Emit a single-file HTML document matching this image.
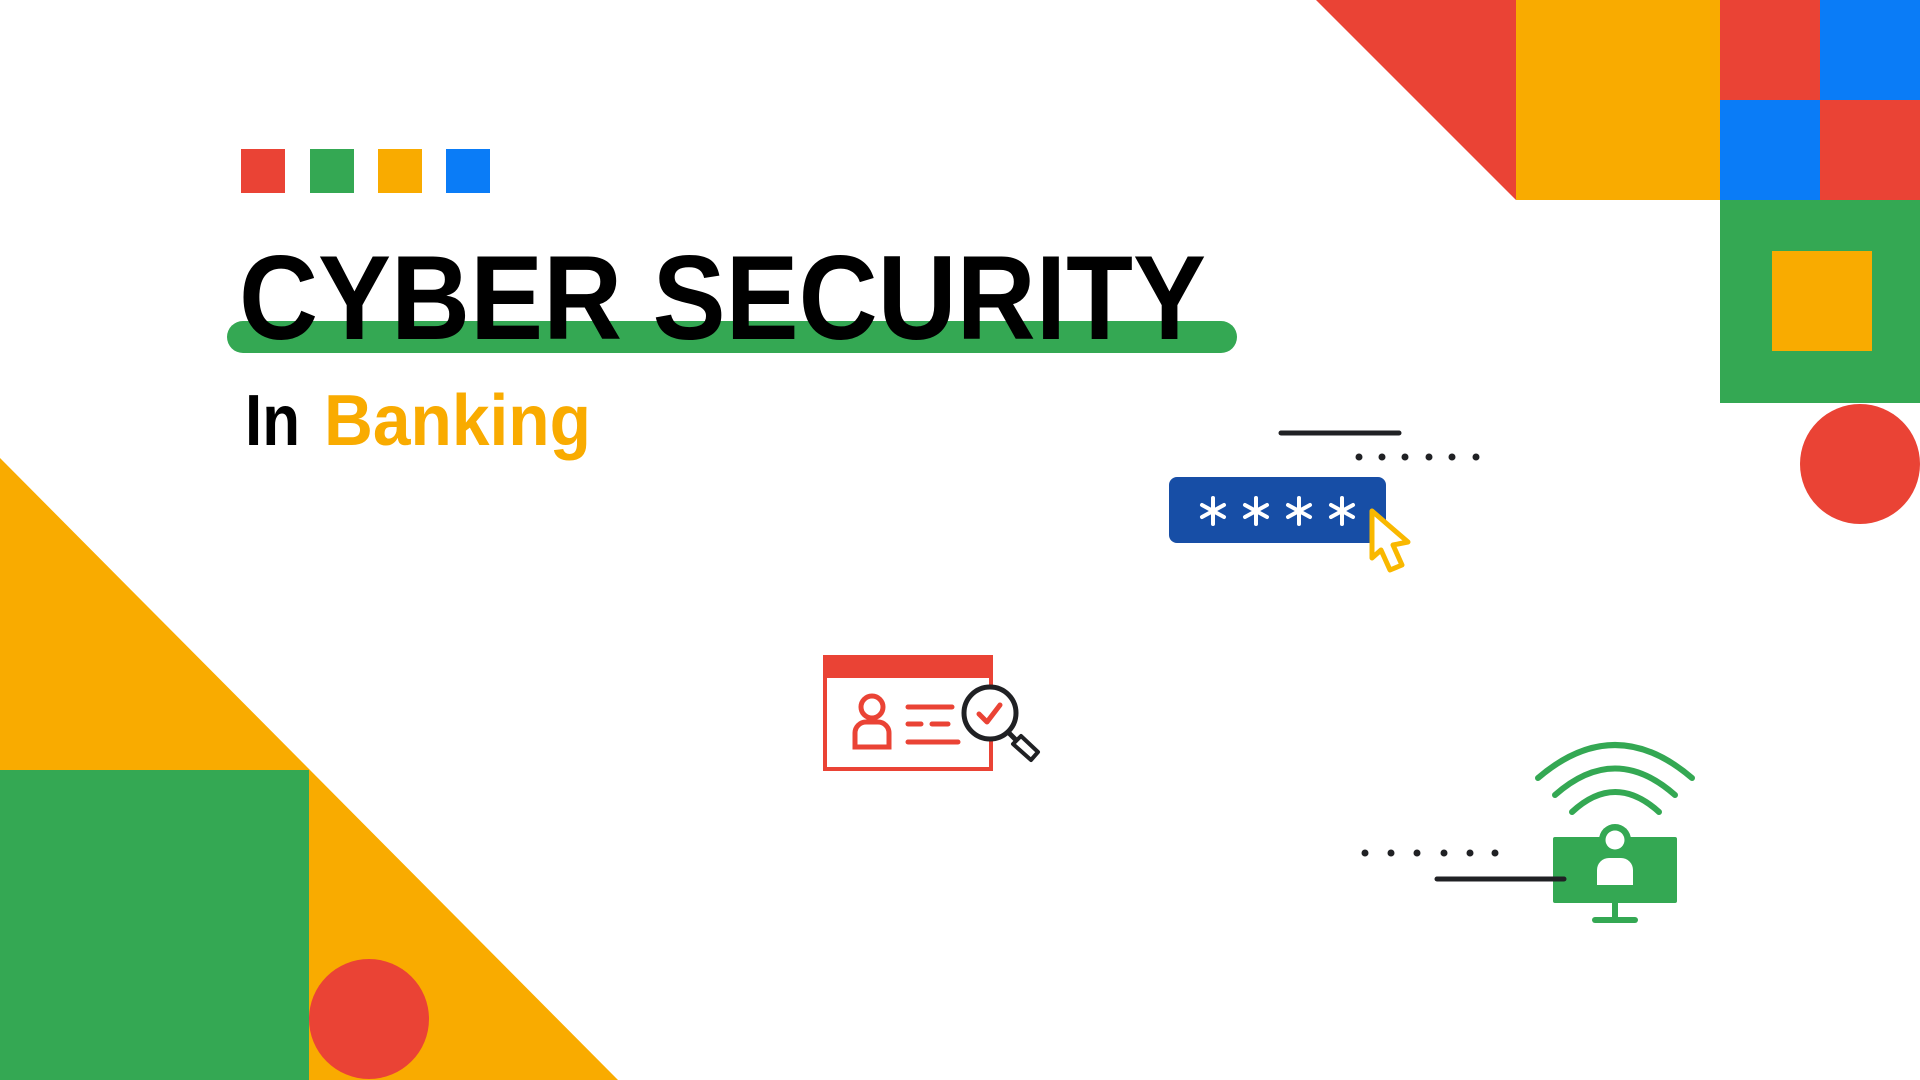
<!DOCTYPE html>
<html><head><meta charset="utf-8"><style>
html,body{margin:0;padding:0;background:#fff;width:1920px;height:1080px;overflow:hidden}
svg{display:block}
</style></head><body>
<svg width="1920" height="1080" viewBox="0 0 1920 1080" xmlns="http://www.w3.org/2000/svg">
<!-- top right -->
<polygon points="1316,0 1516,0 1516,200" fill="#EA4335"/>
<rect x="1516" y="0" width="204" height="200" fill="#F9AB00"/>
<rect x="1720" y="0" width="100" height="100" fill="#EA4335"/>
<rect x="1820" y="0" width="100" height="100" fill="#0A7CF7"/>
<rect x="1720" y="100" width="100" height="100" fill="#0A7CF7"/>
<rect x="1820" y="100" width="100" height="100" fill="#EA4335"/>
<rect x="1720" y="200" width="200" height="203" fill="#34A853"/>
<rect x="1772" y="251" width="100" height="100" fill="#F9AB00"/>
<circle cx="1860" cy="464" r="60" fill="#EA4335"/>
<!-- bottom left -->
<polygon points="0,458 618,1080 0,1080" fill="#F9AB00"/>
<rect x="0" y="770" width="309" height="310" fill="#34A853"/>
<circle cx="369" cy="1019" r="60" fill="#EA4335"/>
<!-- small squares -->
<rect x="241" y="149" width="44" height="44" fill="#EA4335"/>
<rect x="310" y="149" width="44" height="44" fill="#34A853"/>
<rect x="378" y="149" width="44" height="44" fill="#F9AB00"/>
<rect x="446" y="149" width="44" height="44" fill="#0A7CF7"/>
<!-- title -->
<rect x="227" y="321" width="1010" height="32" rx="16" fill="#34A853"/>
<text x="239" y="339" font-family="Liberation Sans, sans-serif" font-weight="bold" font-size="120" textLength="967" lengthAdjust="spacingAndGlyphs" fill="#000">CYBER SECURITY</text>
<text x="245" y="445" font-family="Liberation Sans, sans-serif" font-weight="bold" font-size="72" textLength="55" lengthAdjust="spacingAndGlyphs" fill="#000">In</text>
<text x="324" y="445" font-family="Liberation Sans, sans-serif" font-weight="bold" font-size="72" textLength="267" lengthAdjust="spacingAndGlyphs" fill="#F9AB00">Banking</text>
<!-- password -->
<line x1="1281" y1="433" x2="1399" y2="433" stroke="#202124" stroke-width="5" stroke-linecap="round"/>
<g fill="#202124"><circle cx="1359" cy="457" r="3.5"/><circle cx="1382" cy="457" r="3.5"/><circle cx="1405" cy="457" r="3.5"/><circle cx="1429" cy="457" r="3.5"/><circle cx="1452" cy="457" r="3.5"/><circle cx="1476" cy="457" r="3.5"/></g>
<rect x="1169" y="477" width="217" height="66" rx="8" fill="#174EA6"/>
<g stroke="#fff" stroke-width="4" stroke-linecap="round">
<g transform="translate(1213,511)"><line x1="0" y1="-13" x2="0" y2="13"/><line x1="-11" y1="-6" x2="11" y2="6"/><line x1="-11" y1="6" x2="11" y2="-6"/></g>
<g transform="translate(1256,511)"><line x1="0" y1="-13" x2="0" y2="13"/><line x1="-11" y1="-6" x2="11" y2="6"/><line x1="-11" y1="6" x2="11" y2="-6"/></g>
<g transform="translate(1299,511)"><line x1="0" y1="-13" x2="0" y2="13"/><line x1="-11" y1="-6" x2="11" y2="6"/><line x1="-11" y1="6" x2="11" y2="-6"/></g>
<g transform="translate(1342,511)"><line x1="0" y1="-13" x2="0" y2="13"/><line x1="-11" y1="-6" x2="11" y2="6"/><line x1="-11" y1="6" x2="11" y2="-6"/></g>
</g>
<path d="M1372,511 L1408,542 L1393,545 L1402,565 L1390,570 L1381,550 L1372,558 Z" fill="#fff" stroke="#F9B800" stroke-width="5" stroke-linejoin="round"/>
<!-- ID card -->
<rect x="825" y="657" width="166" height="112" fill="none" stroke="#EA4335" stroke-width="4"/>
<path d="M823,678 V661 a6,6 0 0 1 6,-6 H987 a6,6 0 0 1 6,6 V678 Z" fill="#EA4335"/>
<g stroke="#EA4335" stroke-width="5" fill="none" stroke-linecap="round">
<circle cx="872" cy="707" r="11"/>
<path d="M855,747 V733 a11,11 0 0 1 11,-11 H878 a11,11 0 0 1 11,11 V747 Z"/>
<line x1="908" y1="707" x2="952" y2="707"/>
<line x1="908" y1="724" x2="921" y2="724"/><line x1="932" y1="724" x2="948" y2="724"/>
<line x1="908" y1="742" x2="958" y2="742"/>
</g>
<circle cx="990" cy="713" r="26" fill="#fff" stroke="#202124" stroke-width="5"/>
<path d="M979,714 L987,722 L1000,705" fill="none" stroke="#EA4335" stroke-width="5" stroke-linecap="round" stroke-linejoin="round"/>
<line x1="1008" y1="732" x2="1016" y2="740" stroke="#202124" stroke-width="5"/>
<path d="M1013,744 L1021,736 L1038,752 L1031,760 Z" fill="#fff" stroke="#202124" stroke-width="4" stroke-linejoin="round"/>
<!-- monitor -->
<g fill="none" stroke="#34A853" stroke-width="6" stroke-linecap="round">
<path d="M1538,778 Q1615,712 1692,778"/>
<path d="M1555,795 Q1615,742 1675,795"/>
<path d="M1572,812 Q1615,772 1659,812"/>
</g>
<g fill="#202124"><circle cx="1365" cy="853" r="3.5"/><circle cx="1391" cy="853" r="3.5"/><circle cx="1417" cy="853" r="3.5"/><circle cx="1444" cy="853" r="3.5"/><circle cx="1470" cy="853" r="3.5"/><circle cx="1495" cy="853" r="3.5"/></g>
<rect x="1553" y="837" width="124" height="66" rx="2" fill="#34A853"/>
<rect x="1612" y="902" width="6" height="16" fill="#34A853"/>
<rect x="1592" y="917" width="46" height="6" rx="3" fill="#34A853"/>
<circle cx="1615" cy="840" r="16" fill="#34A853"/>
<circle cx="1615" cy="840" r="9.5" fill="#fff"/>
<path d="M1597,885 V870 a12,12 0 0 1 12,-12 H1621 a12,12 0 0 1 12,12 V885 Z" fill="#fff"/>
<line x1="1437" y1="879" x2="1564" y2="879" stroke="#202124" stroke-width="5" stroke-linecap="round"/>
</svg>
</body></html>
